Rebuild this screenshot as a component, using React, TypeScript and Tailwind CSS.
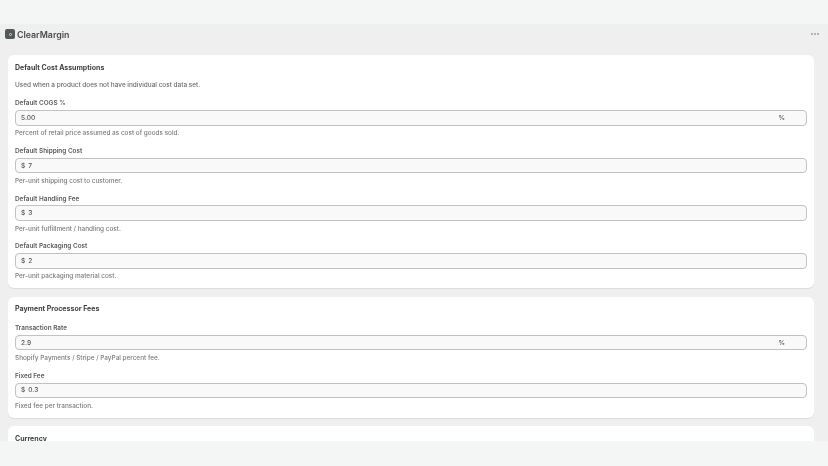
import React from "react";

function Field({ label, value, help, prefix, suffix }: { label: string; value: string; help: string; prefix?: string; suffix?: string }) {
  return (
    <div className="flex flex-col">
      <div className="pt-[0.5px] text-[6.4px] leading-[10px] font-semibold text-[#5a5a5a]">{label}</div>
      <div className="mt-[1.75px] h-[15.5px] flex items-center rounded-[4px] border border-[#c2c2c2] bg-[#f9f9f9] bg-[radial-gradient(#e4e4e4_0.5px,transparent_0.5px)] bg-[length:2px_2px] pl-[5px] pr-[21px] pt-[2px] text-[6.6px] font-medium text-[#555555]">
        {prefix && <span className="mr-[3px]">{prefix}</span>}
        <span className="flex-1">{value}</span>
        {suffix && <span>{suffix}</span>}
      </div>
      <div className="mt-[2.25px] pt-[0.5px] text-[6.42px] leading-[10px] font-medium text-[#7a7a7a]">{help}</div>
    </div>
  );
}

function Card({ title, children }: { title: string; children?: React.ReactNode }) {
  return (
    <section className="rounded-[6px] bg-white px-[7px] pt-[7.5px] pb-[7.1px] shadow-[0_1px_0_#dcdcdc] shrink-0">
      <h2 className="text-[7px] leading-[10px] font-bold text-[#404040]">{title}</h2>
      {children}
    </section>
  );
}

export default function App() {
  return (
    <div className="h-[466px] w-[828px] flex flex-col overflow-hidden bg-[#f4f6f5] font-['Inter',sans-serif] blur-[0.35px]">
      <div className="h-[24px] shrink-0" />
      <main className="h-[417px] shrink-0 overflow-hidden bg-[#efefef] flex flex-col">
        <header className="h-[20px] mb-[11px] shrink-0 flex items-center justify-between pl-[5px] pr-[9px]">
          <div className="flex items-center gap-[2px]">
            <div className="w-[10px] h-[10px] rounded-[2px] bg-[#555a58] flex items-center justify-center">
              <span className="block w-[3px] h-[3px] rounded-full border-[0.5px] border-[#cfcfcf]" />
            </div>
            <span className="text-[8.8px] font-semibold text-[#4a4a4a] pt-[0.5px]">ClearMargin</span>
          </div>
          <div className="flex gap-[1px]">
            <span className="w-[2px] h-[2px] rounded-full bg-[#a0a0a0]" />
            <span className="w-[2px] h-[2px] rounded-full bg-[#a0a0a0]" />
            <span className="w-[2px] h-[2px] rounded-full bg-[#a0a0a0]" />
          </div>
        </header>
        <div className="w-[806px] ml-[8px] flex flex-col gap-[8.5px]">
          <Card title="Default Cost Assumptions">
            <p className="mt-[7.5px] text-[6.45px] leading-[10px] font-medium text-[#6a6a6a]">Used when a product does not have individual cost data set.</p>
            <div className="mt-[7.9px] flex flex-col gap-[7.17px]">
              <Field label="Default COGS %" value="5.00" suffix="%" help="Percent of retail price assumed as cost of goods sold." />
              <Field label="Default Shipping Cost" value="7" prefix="$" help="Per-unit shipping cost to customer." />
              <Field label="Default Handling Fee" value="3" prefix="$" help="Per-unit fulfillment / handling cost." />
              <Field label="Default Packaging Cost" value="2" prefix="$" help="Per-unit packaging material cost." />
            </div>
          </Card>
          <Card title="Payment Processor Fees">
            <div className="mt-[8.2px] flex flex-col gap-[7.17px]">
              <Field label="Transaction Rate" value="2.9" suffix="%" help="Shopify Payments / Stripe / PayPal percent fee." />
              <Field label="Fixed Fee" value="0.3" prefix="$" help="Fixed fee per transaction." />
            </div>
          </Card>
          <Card title="Currency" />
        </div>
      </main>
    </div>
  );
}
